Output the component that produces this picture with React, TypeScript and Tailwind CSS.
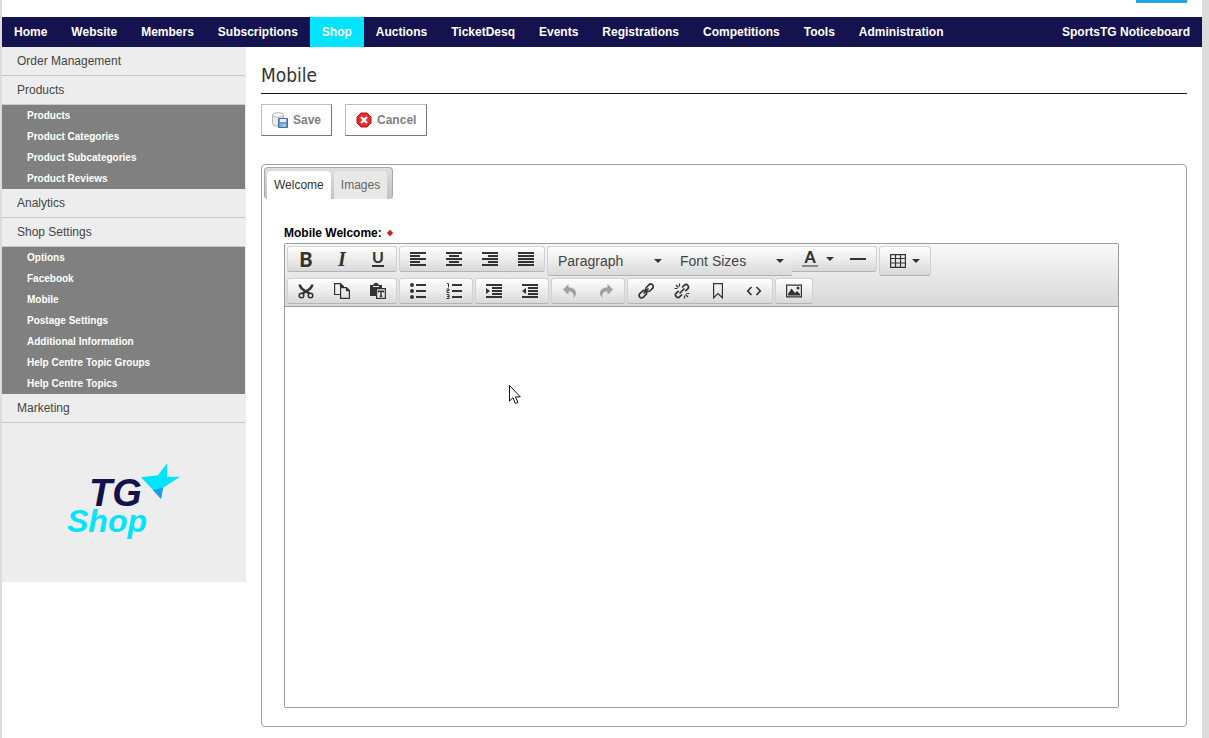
import { useState } from 'react';
import type { ReactNode } from 'react';

const navItems = [
  'Home',
  'Website',
  'Members',
  'Subscriptions',
  'Shop',
  'Auctions',
  'TicketDesq',
  'Events',
  'Registrations',
  'Competitions',
  'Tools',
  'Administration',
];

const sideMenu: { label: string; children?: string[] }[] = [
  { label: 'Order Management' },
  {
    label: 'Products',
    children: ['Products', 'Product Categories', 'Product Subcategories', 'Product Reviews'],
  },
  { label: 'Analytics' },
  {
    label: 'Shop Settings',
    children: [
      'Options',
      'Facebook',
      'Mobile',
      'Postage Settings',
      'Additional Information',
      'Help Centre Topic Groups',
      'Help Centre Topics',
    ],
  },
  { label: 'Marketing' },
];

function Icon({ children, muted }: { children: ReactNode; muted?: boolean }) {
  return (
    <svg
      viewBox="0 0 16 16"
      className={`h-4 w-4 ${muted ? 'text-[#a0a0a0]' : 'text-[#333]'}`}
      fill="none"
      stroke="currentColor"
      strokeWidth="2"
      aria-hidden="true"
    >
      {children}
    </svg>
  );
}

function Caret() {
  return (
    <svg viewBox="0 0 8 4" className="h-1 w-2" aria-hidden="true">
      <path d="M0 0h8L4 4z" fill="#333" />
    </svg>
  );
}

const icons = {
  alignLeft: <path d="M0 2h16M0 5h10M0 8h16M0 11h10M0 14h16" />,
  alignCenter: <path d="M0 2h16M3 5h10M0 8h16M3 11h10M0 14h16" />,
  alignRight: <path d="M0 2h16M6 5h10M0 8h16M6 11h10M0 14h16" />,
  alignJustify: <path d="M0 2h16M0 5h16M0 8h16M0 11h16M0 14h16" />,
  hr: <path d="M0 8h16" />,
  cut: (
    <>
      <path d="M1.800 1.500C2 4.500 4 6 6.500 7.500L11.500 10.500M14.200 1.500C14 4.500 12 6 9.500 7.500L4.500 10.500" strokeWidth="2.600" />
      <circle cx="3.500" cy="12.500" r="2.300" strokeWidth="1.500" />
      <circle cx="12.500" cy="12.500" r="2.300" strokeWidth="1.500" />
    </>
  ),
  copy: (
    <>
      <path d="M6 11.500H.6V.6h5.900l3 3V5M6.500.6v3h3" strokeWidth="1.200" />
      <path d="M6.600 4.600h5.900l2.900 3v7.800H6.600zM12.500 4.600v3h2.900" strokeWidth="1.200" />
    </>
  ),
  paste: (
    <>
      <path d="M0 2h3.500V.8L5 0h2l1.500.8V2H12v3H6v8H0z" fill="currentColor" stroke="none" />
      <path d="M3 3.500h6" stroke="#f4f4f4" strokeWidth="1" />
      <path d="M6.600 5.600h8.800v9.800H6.600z" strokeWidth="1.200" />
      <path d="M8.500 9.500v-1.200h5v1.200M11 8.300v5M9.800 13.200h2.400" strokeWidth="1.400" />
    </>
  ),
  bullets: (
    <>
      <path d="M6 2h10M6 8h10M6 14h10" />
      <g fill="currentColor" stroke="none">
        <circle cx="2" cy="2" r="2" />
        <circle cx="2" cy="8" r="2" />
        <circle cx="2" cy="14" r="2" />
      </g>
    </>
  ),
  numbers: (
    <>
      <path d="M6 2h10M6 8h10M6 14h10" />
      <path
        d="M1 .5h1.500V4.500M.5 6h2.500v1.500H1v2h2.500M.5 11.500h2.500v4H.5M1 13.500h2"
        strokeWidth="1"
      />
    </>
  ),
  indent: (
    <>
      <path d="M0 2h16M6 5h10M6 8h10M6 11h10M0 14h16" />
      <path d="M0 5v6l4-3z" fill="currentColor" stroke="none" />
    </>
  ),
  outdent: (
    <>
      <path d="M0 2h16M6 5h10M6 8h10M6 11h10M0 14h16" />
      <path d="M4 5v6L0 8z" fill="currentColor" stroke="none" />
    </>
  ),
  undo: (
    <path
      d="M6.500 1v3.500c5 0 7.500 2.500 7.500 5.500 0 2.500-1.500 4-2.500 5C12.500 10 10 8.500 6.500 8.500V12L1 6.500z"
      fill="currentColor"
      stroke="none"
    />
  ),
  redo: (
    <path
      d="M9.500 1v3.500C4.500 4.500 2 7 2 10c0 2.500 1.500 4 2.500 5C3.500 10 6 8.500 9.500 8.500V12L15 6.500z"
      fill="currentColor"
      stroke="none"
    />
  ),
  link: (
    <g strokeWidth="1.700">
      <rect x="7.300" y="2.300" width="8.400" height="5" rx="2.500" transform="rotate(-45 11.500 4.800)" />
      <rect x=".6" y="8.700" width="8.400" height="5" rx="2.500" transform="rotate(-45 4.800 11.200)" />
      <path d="M5.500 10.500l5-5" />
    </g>
  ),
  unlink: (
    <g strokeWidth="1.700">
      <path d="M8 4.500l2.200-2.200a2.400 2.400 0 0 1 3.500 3.500L11.300 8.200M8 11.500l-2.200 2.200a2.400 2.400 0 0 1-3.500-3.500L4.700 7.800M5.500 10.500l5-5" />
      <path d="M2 2l2.500 2.500M5.500.5v3M.5 5.500h3M14 14l-2.500-2.500M10.500 15.500v-3M15.500 10.500h-3" strokeWidth="1.200" />
    </g>
  ),
  bookmark: <path d="M3.600.6h8.800v14.200L8 10.500l-4.400 4.300z" strokeWidth="1.200" />,
  code: <path d="M5.500 4L1.700 8l3.800 4M10.500 4l3.800 4-3.800 4" strokeWidth="1.700" />,
  image: (
    <>
      <path d="M.6 2.100h14.800v11.800H.6z" strokeWidth="1.200" />
      <path d="M2 12.500V11l3.500-5.500L9 10l2-2 3 3v1.500z" fill="currentColor" stroke="none" />
      <circle cx="12" cy="5" r="1.500" fill="currentColor" stroke="none" />
    </>
  ),
  table: <path d="M.6 1.600h14.800v12.800H.6zM.6 5.500h14.800M.6 10h14.800M5.500 2v12M10.500 2v12" strokeWidth="1.200" />,
};

type IconName = keyof typeof icons;

const groupClass =
  'flex rounded-[3px] border border-[#d0d0d0] border-b-[#b3b3b3] bg-linear-to-b from-white to-[#d9d9d9]';

function ToolButton({ label, icon, muted }: { label: string; icon: IconName; muted?: boolean }) {
  return (
    <button type="button" aria-label={label} className="flex h-6 w-9 items-center justify-center">
      <Icon muted={muted}>{icons[icon]}</Icon>
    </button>
  );
}

function ToolGroup({ items }: { items: [string, IconName, boolean?][] }) {
  return (
    <div className={groupClass}>
      {items.map(([label, icon, muted]) => (
        <ToolButton key={label} label={label} icon={icon} muted={muted} />
      ))}
    </div>
  );
}

function ListBox({ label, options }: { label: string; options: string[] }) {
  return (
    <div className="relative flex h-7 w-[122px] items-center">
      <select
        aria-label={label}
        className="h-full w-full appearance-none bg-transparent pl-2.5 text-sm text-[#444] outline-none"
      >
        {options.map((o) => (
          <option key={o}>{o}</option>
        ))}
      </select>
      <span className="pointer-events-none absolute right-2">
        <Caret />
      </span>
    </div>
  );
}

function Toolbar() {
  return (
    <div className="flex flex-col gap-0.5 border-b border-[#9b9b9f] bg-linear-to-b from-[#f8f8f8] to-[#d8d8d8] p-0.5">
      <div className="flex items-start gap-0.5">
        <div className={groupClass}>
          <button type="button" aria-label="Bold" className="h-6 w-9 font-['Lato'] text-xl/6 font-black text-[#333]">
            B
          </button>
          <button type="button" aria-label="Italic" className="h-6 w-9 font-['Liberation_Serif'] text-xl/6 font-bold text-[#333] italic">
            I
          </button>
          <button type="button" aria-label="Underline" className="flex h-6 w-9 items-center justify-center">
            <span className="h-4 w-3 border-b-2 border-[#333] text-center font-['Lato'] text-base/3 font-bold text-[#333]">
              U
            </span>
          </button>
        </div>
        <ToolGroup
          items={[
            ['Align left', 'alignLeft'],
            ['Align center', 'alignCenter'],
            ['Align right', 'alignRight'],
            ['Justify', 'alignJustify'],
          ]}
        />
        <div className="flex items-start">
          <div className="flex rounded-l-[3px] border border-r-0 border-[#d0d0d0] border-b-[#b3b3b3] bg-linear-to-b from-white to-[#d9d9d9]">
            <ListBox label="Block format" options={['Paragraph', 'Heading 1', 'Heading 2']} />
            <ListBox label="Font size" options={['Font Sizes', '8pt', '10pt', '12pt']} />
          </div>
          <div className="flex rounded-r-[3px] border border-l-0 border-[#d0d0d0] border-b-[#b3b3b3] bg-linear-to-b from-white to-[#d9d9d9]">
            <button type="button" aria-label="Text color" className="flex h-6 w-12 items-center gap-2 pl-2.5">
              <span className="h-4 w-4 border-b-2 border-[#888] text-center font-['Lato'] text-base/3 font-black text-[#333]">
                A
              </span>
              <Caret />
            </button>
            <ToolButton label="Horizontal line" icon="hr" />
          </div>
        </div>
        <div className={groupClass}>
          <button type="button" aria-label="Table" className="flex h-7 w-[50px] items-center gap-1.5 pl-2.5">
            <Icon>{icons.table}</Icon>
            <Caret />
          </button>
        </div>
      </div>
      <div className="flex items-start gap-0.5">
        <ToolGroup items={[['Cut', 'cut'], ['Copy', 'copy'], ['Paste as text', 'paste']]} />
        <ToolGroup items={[['Bullet list', 'bullets'], ['Numbered list', 'numbers']]} />
        <ToolGroup items={[['Increase indent', 'indent'], ['Decrease indent', 'outdent']]} />
        <ToolGroup items={[['Undo', 'undo', true], ['Redo', 'redo', true]]} />
        <ToolGroup
          items={[
            ['Insert link', 'link'],
            ['Remove link', 'unlink'],
            ['Bookmark', 'bookmark'],
            ['Source code', 'code'],
          ]}
        />
        <ToolGroup items={[['Insert image', 'image']]} />
      </div>
    </div>
  );
}

function ShopLogo() {
  return (
    <svg viewBox="0 0 120 80" className="h-20 w-[120px] font-['Liberation_Sans',Arial,sans-serif] italic" role="img" aria-label="TG Shop">
      <text x="25" y="45" fontSize="38" fontWeight="700" fill="#15114c">
        TG
      </text>
      <text x="3" y="71" fontSize="32" fontWeight="700" fill="#00e4ff">
        Shop
      </text>
      <path d="M77 16.300L94 14.300 103 2.300V15.700H116L99 26.700 97 38 89 29z" fill="#00e4ff" />
      <path d="M89 29l10-2.300L97 38z" fill="#1e9bf0" />
    </svg>
  );
}

function Sidebar() {
  return (
    <aside className="flex h-[535px] w-[244px] shrink-0 flex-col bg-[#ededed]">
      <ul className="mr-px">
        {sideMenu.map((item) => (
          <li key={item.label}>
            <a href="#" className="block border-b border-[#c8c8c8] pl-[15px] text-xs/7 text-[#444]">
              {item.label}
            </a>
            {item.children && (
              <ul className="bg-[#808080]">
                {item.children.map((child) => (
                  <li key={child}>
                    <a href="#" className="block pl-[25px] text-[10px]/[21px] font-bold text-white">
                      {child}
                    </a>
                  </li>
                ))}
              </ul>
            )}
          </li>
        ))}
      </ul>
      <div className="flex justify-center pt-[38px]">
        <ShopLogo />
      </div>
    </aside>
  );
}

function SaveIcon() {
  return (
    <svg viewBox="0 0 16 16" className="h-4 w-4" aria-hidden="true">
      <path d="M.5 3v8.500c0 1.500 2.500 2.500 5.500 2.500s5.500-1 5.500-2.500V3z" fill="#ececec" stroke="#b5b5b5" />
      <ellipse cx="6" cy="3" rx="5.500" ry="2.300" fill="#fafafa" stroke="#b5b5b5" />
      <path d="M6.500 6.500h9v9h-9z" fill="#6f98dd" stroke="#4468b0" />
      <path d="M8 7h6v3H8z" fill="#eaf2ff" />
      <path d="M8.500 12h5v3h-5z" fill="#a9d9b0" />
      <path d="M9.500 12.500h1v2h-1z" fill="#4468b0" />
    </svg>
  );
}

function CancelIcon() {
  return (
    <svg viewBox="0 0 16 16" className="h-4 w-4" aria-hidden="true">
      <path d="M5 1h6l4 4v6l-4 4H5l-4-4V5z" fill="#ea2b2b" stroke="#b81414" />
      <path d="M5 5l6 6M11 5l-6 6" stroke="#fff" strokeWidth="2.400" />
    </svg>
  );
}

function ActionButton({ icon, children }: { icon: ReactNode; children: ReactNode }) {
  return (
    <button
      type="button"
      className="flex h-8 items-center gap-[5px] border border-[#bdbdbd] border-r-[#777] border-b-[#777] bg-white px-2.5 text-xs font-bold text-[#808080]"
    >
      {icon}
      {children}
    </button>
  );
}

export default function App() {
  const [tab, setTab] = useState('Welcome');

  return (
    <div className="min-h-screen border-r-[7px] border-l-2 border-r-[#dcdcdc] border-l-[#dcdcdc] bg-white font-['Liberation_Sans',Arial,sans-serif]">
      <div className="flex h-[17px] items-start justify-end pr-[15px]">
        <div className="h-[3px] w-[51px] border-b border-[#4a9cc4] bg-[#14a9f5]" />
      </div>

      <nav className="flex h-[30px] bg-[#15134f] text-xs/[30px] font-bold text-white">
        {navItems.map((item) => (
          <a
            key={item}
            href="#"
            className={item === 'Shop' ? 'bg-[#00e4ff] px-3' : 'px-3'}
          >
            {item}
          </a>
        ))}
        <a href="#" className="ml-auto px-3">
          SportsTG Noticeboard
        </a>
      </nav>

      <div className="flex items-start">
        <Sidebar />

        <main className="min-w-0 flex-1 px-[15px]">
          <h1 className="border-b border-[#15132b] pt-[14px] pb-1 font-['DejaVu_Sans_Condensed','DejaVu_Sans',sans-serif] text-[19px]/7 text-[#333]">
            Mobile
          </h1>

          <div className="mt-2.5 flex gap-[13px]">
            <ActionButton icon={<SaveIcon />}>Save</ActionButton>
            <ActionButton icon={<CancelIcon />}>Cancel</ActionButton>
          </div>

          <section className="mt-7 rounded-[4px] border border-[#a3a3a3] pb-[18px]">
            <div
              role="tablist"
              className="mt-0.5 ml-0.5 flex h-8 w-fit gap-[3px] rounded-[4px] border border-b-0 border-[#a8a8a8] bg-linear-to-b from-[#dedede] to-[#c2c2c2] pt-[3px] pr-[5px] pl-0.5"
            >
              {['Welcome', 'Images'].map((name) => (
                <button
                  key={name}
                  type="button"
                  role="tab"
                  aria-selected={tab === name}
                  onClick={() => setTab(name)}
                  className={`rounded-t-[4px] px-[7px] text-xs ${
                    tab === name ? 'bg-white text-[#333]' : 'bg-[#e8e8e8] text-[#666]'
                  }`}
                >
                  {name}
                </button>
              ))}
            </div>

            <div className="mt-6 mr-[67px] ml-[22px]">
              <label htmlFor="mobile-welcome" className="flex h-5 items-center gap-1 text-xs font-bold text-black">
                Mobile Welcome:
                <svg viewBox="0 0 8 8" className="h-2 w-2" aria-hidden="true">
                  <path d="M4 .8L7.200 4 4 7.200.8 4z" fill="#d81e1e" />
                </svg>
              </label>
              <div className="relative rounded-[2px] border border-[#9b9b9f]">
                <Toolbar />
                <textarea
                  id="mobile-welcome"
                  className="block h-[400px] w-full resize-none bg-white p-2 text-sm outline-none"
                />
                {/* mouse pointer */}
                <svg viewBox="0 0 12 20" className="pointer-events-none absolute top-[141px] left-[224px] h-5 w-3" aria-hidden="true">
                  <path d="M.5.5v15.500l3.500-3.300 2.300 5.800 2.600-1.100-2.400-5.500h4.800z" fill="#fff" stroke="#111" />
                </svg>
              </div>
            </div>
          </section>
        </main>
      </div>
    </div>
  );
}
